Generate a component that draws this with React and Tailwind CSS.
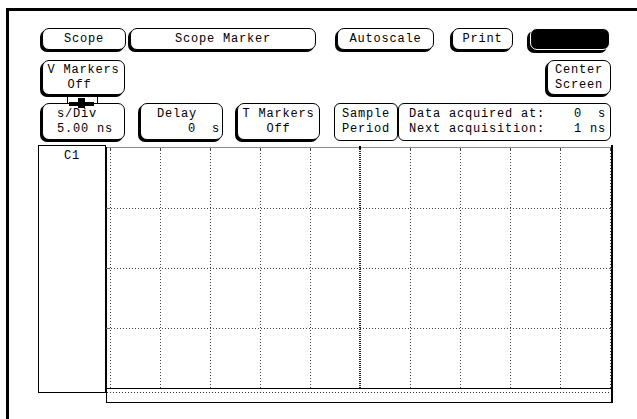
import React from 'react';

const xs = [110, 160, 210, 260, 310, 410, 460, 510, 560, 610];
const ys = [208, 268, 328];

const Key = ({ className = '', children }) => (
  <div className={`shrink-0 rounded-[7px] border border-black bg-white shadow-[-2px_2px_0_0_#000] ${className}`}>
    {children}
  </div>
);

const Grid = () => (
  <svg width="512" height="260" viewBox="104 145 512 260" className="block shrink-0 -ml-[2px]">
    {/* frame of the trace area */}
    <line x1="107" y1="147.5" x2="611" y2="147.5" stroke="#8a8a8a" />
    <line x1="106" y1="147" x2="106" y2="388" stroke="#000" strokeWidth="2" />
    <line x1="106.5" y1="388" x2="106.5" y2="403" stroke="#000" />
    <line x1="612" y1="145" x2="612" y2="403" stroke="#000" strokeWidth="2" />
    <line x1="106" y1="388.5" x2="612" y2="388.5" stroke="#000" />
    <line x1="107" y1="392.5" x2="611" y2="392.5" stroke="#333" strokeDasharray="1 2" />
    <line x1="106" y1="402.5" x2="613" y2="402.5" stroke="#000" />

    {xs.map((x) => (
      <g key={x}>
        <line x1={x + 0.5} y1="150" x2={x + 0.5} y2="388" stroke="#444" strokeDasharray="1 2" />
        <line x1={x + 0.5} y1="148" x2={x + 0.5} y2="150" stroke="#444" />
      </g>
    ))}
    {ys.map((y) => (
      <g key={y}>
        <line x1="108" y1={y + 0.5} x2="610" y2={y + 0.5} stroke="#444" strokeDasharray="1 2" />
        <line x1="106" y1={y + 0.5} x2="110" y2={y + 0.5} stroke="#666" />
        <line x1="609" y1={y + 0.5} x2="612" y2={y + 0.5} stroke="#666" />
      </g>
    ))}

    {/* time marker */}
    <line x1="360" y1="149" x2="360" y2="388" stroke="#222" strokeWidth="2" strokeDasharray="1 1" />
    <rect x="359" y="146" width="2" height="3" fill="#000" />
  </svg>
);

export default function App() {
  return (
    <div className="w-[637px] h-[419px] overflow-hidden bg-white text-black font-['Liberation_Mono',monospace] text-[12px] tracking-[0.8px] leading-[15px]">
      <div className="ml-[6px] mt-[8px] w-[700px] h-[500px] border-l-[3px] border-t-[3px] border-black pt-[17px]">
        {/* top row */}
        <div className="flex items-start">
          <Key className="ml-[33px] w-[84px] h-[22px] flex items-center justify-center">Scope</Key>
          <Key className="ml-[4px] w-[186px] h-[22px] flex items-center justify-center">Scope Marker</Key>
          <Key className="ml-[21px] w-[97px] h-[22px] flex items-center justify-center">Autoscale</Key>
          <Key className="ml-[18px] w-[61px] h-[22px] flex items-center justify-center">Print</Key>
          <div className="ml-[17px] w-[80px] h-[22px] shrink-0 rounded-[7px] border border-white bg-black shadow-[-3px_3px_0_0_#000]" />
        </div>

        {/* marker row */}
        <div className="flex items-start mt-[10px]">
          <Key className="ml-[33px] w-[83px] h-[35px] flex flex-col justify-center items-center">
            <span>V Markers</span>
            <span className="pr-[8px]">Off</span>
          </Key>
          <Key className="ml-[422px] w-[64px] h-[35px] flex flex-col justify-center items-center">
            <span>Center</span>
            <span>Screen</span>
          </Key>
        </div>

        {/* link between V Markers and s/Div, with the cursor */}
        <div className="relative h-[8px]">
          <div className="ml-[58px] w-[31px] h-full border-x border-black" />
          <div className="absolute z-10 left-[60px] top-[7px] w-[25px] h-[4px] bg-black" />
          <div className="absolute z-10 left-[69px] top-[3px] w-[7px] h-[10px] bg-black" />
        </div>

        {/* settings row */}
        <div className="flex items-start">
          <Key className="ml-[33px] w-[83px] h-[37px] flex flex-col justify-center pl-[14px]">
            <span>s/Div</span>
            <span>5.00 ns</span>
          </Key>
          <Key className="ml-[15px] w-[83px] h-[37px] flex flex-col justify-center pl-[16px] pr-[2px]">
            <span>Delay</span>
            <span className="self-end whitespace-pre">0  s</span>
          </Key>
          <Key className="ml-[14px] w-[83px] h-[37px] flex flex-col justify-center items-center">
            <span>T Markers</span>
            <span>Off</span>
          </Key>
          <div className="ml-[14px] w-[64px] h-[38px] shrink-0 rounded-[6px] border border-black flex flex-col justify-center items-center">
            <span>Sample</span>
            <span>Period</span>
          </div>
          <div className="w-[213px] h-[38px] shrink-0 rounded-[6px] border border-black flex flex-col justify-center pl-[10px] pr-[4px]">
            <div className="flex justify-between whitespace-pre">
              <span>Data acquired at:</span>
              <span>0  s</span>
            </div>
            <div className="flex justify-between whitespace-pre">
              <span>Next acquisition:</span>
              <span>1 ns</span>
            </div>
          </div>
        </div>

        {/* trace area */}
        <div className="flex items-start mt-[4px]">
          <div className="ml-[29px] w-[68px] h-[248px] shrink-0 border border-black text-center pt-[3px]">C1</div>
          <Grid />
        </div>
      </div>
    </div>
  );
}
